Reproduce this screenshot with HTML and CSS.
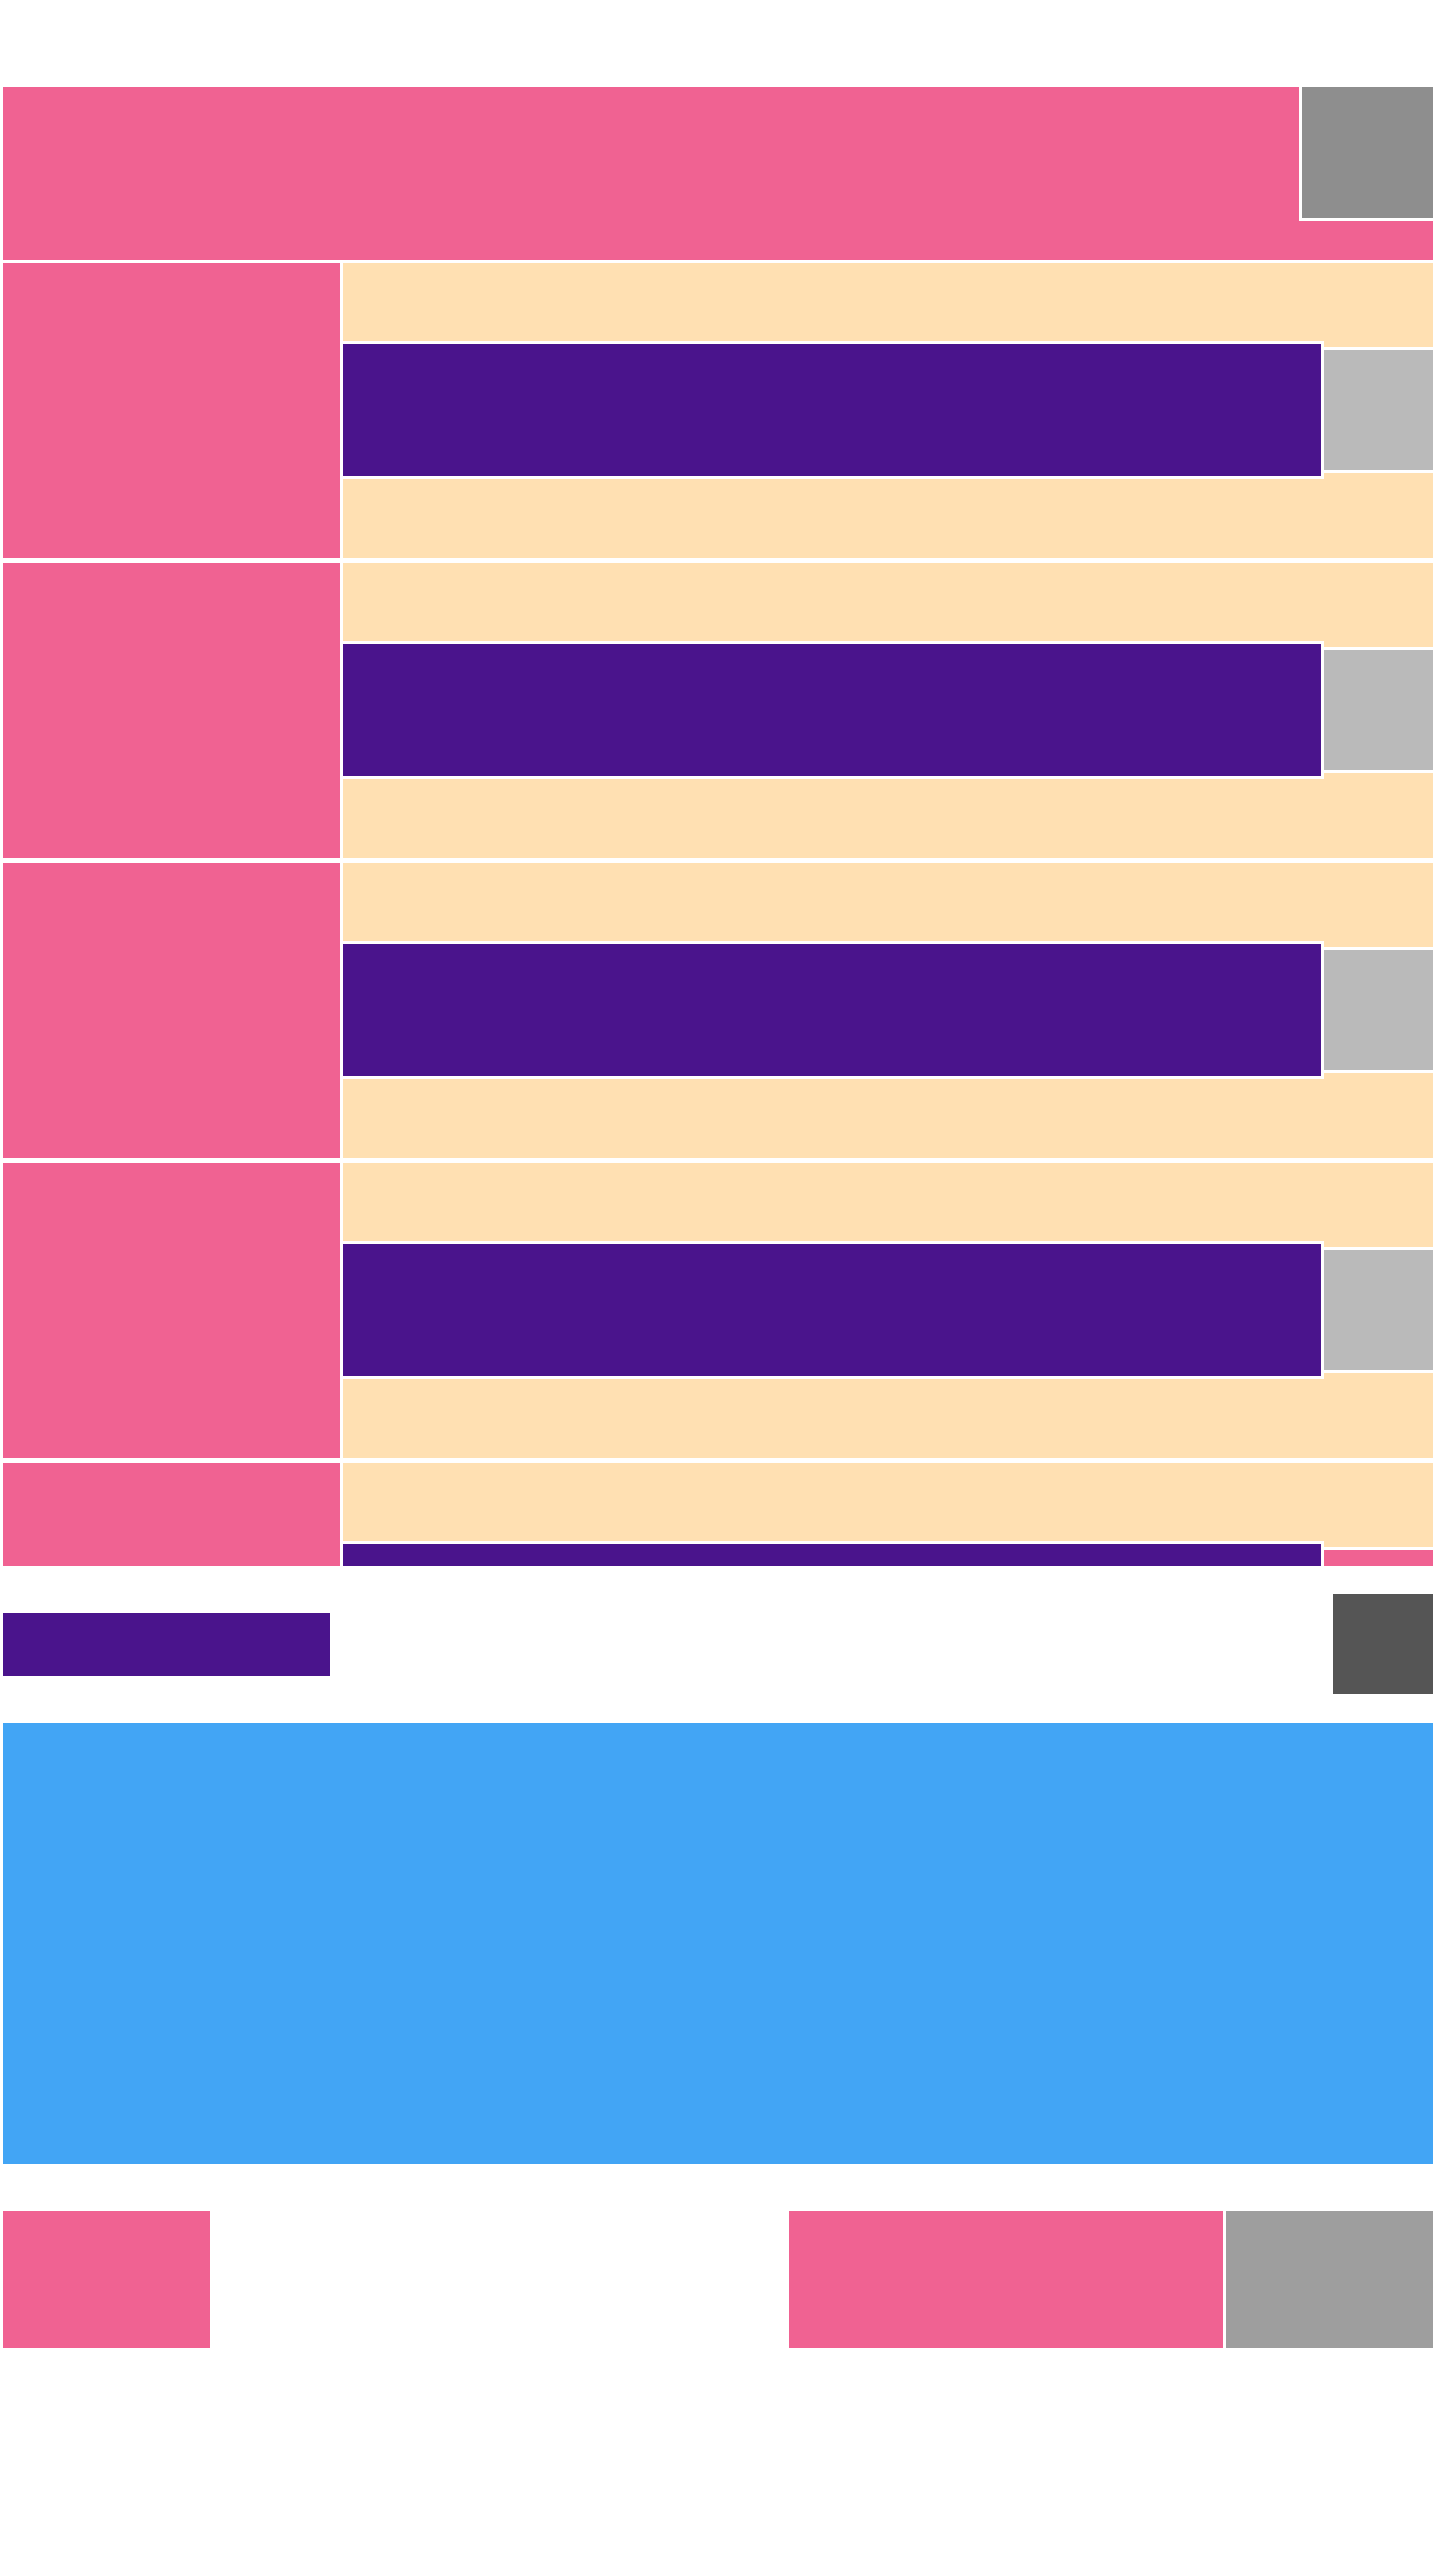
FILE: index.html
```html
<!DOCTYPE html>
<html lang="en">
<head>
  <meta charset="UTF-8">
  <title>Layout</title>
  <link rel="stylesheet" href="styles.css">
</head>
<body>
  <div class="page">
    <header class="header">
      <div class="header-box"></div>
    </header>

    <div class="list">
      <div class="row">
        <div class="row-side"></div>
        <div class="row-body">
          <div class="row-main"></div>
          <div class="row-tag"></div>
        </div>
      </div>
      <div class="row">
        <div class="row-side"></div>
        <div class="row-body">
          <div class="row-main"></div>
          <div class="row-tag"></div>
        </div>
      </div>
      <div class="row">
        <div class="row-side"></div>
        <div class="row-body">
          <div class="row-main"></div>
          <div class="row-tag"></div>
        </div>
      </div>
      <div class="row">
        <div class="row-side"></div>
        <div class="row-body">
          <div class="row-main"></div>
          <div class="row-tag"></div>
        </div>
      </div>
      <div class="row">
        <div class="row-side"></div>
        <div class="row-body">
          <div class="row-main"></div>
          <div class="row-tag active"></div>
        </div>
      </div>
    </div>

    <div class="toolbar">
      <div class="toolbar-bar"></div>
      <div class="toolbar-btn"></div>
    </div>

    <div class="panel"></div>

    <footer class="footer">
      <div class="footer-left"></div>
      <div class="footer-right">
        <div class="footer-main"></div>
        <div class="footer-side"></div>
      </div>
    </footer>
  </div>
</body>
</html>
```

FILE: styles.css
```css
* {
  box-sizing: border-box;
}

body {
  margin: 0;
  background: #ffffff;
  font-family: "Liberation Sans", Arial, sans-serif;
}

.page {
  padding: 87px 7px 0 3px;
  min-height: 2560px;
}

.header {
  height: 173px;
  background-color: #f06292;
  display: flex;
  justify-content: flex-end;
  align-items: flex-start;
}

.header-box {
  width: 134px;
  height: 134px;
  background-color: #8e8e8e;
  border-left: 3px solid #ffffff;
  border-bottom: 3px solid #ffffff;
}

.list {
  margin-top: 3px;
  height: 1303px;
  overflow: hidden;
  display: flex;
  flex-direction: column;
  gap: 5px;
}

.row {
  flex: 0 0 295px;
  display: flex;
  gap: 3px;
}

.row-side {
  width: 337px;
  background-color: #f06292;
}

.row-body {
  flex: 1;
  background-color: #ffe0b2;
  display: flex;
  align-items: center;
  padding-bottom: 1px;
}

.row-main {
  flex: 1;
  height: 138px;
  background-color: #4a148c;
  border: 3px solid #ffffff;
  border-left: 0;
}

.row-tag {
  width: 109px;
  height: 126px;
  background-color: #bababa;
  border-top: 3px solid #ffffff;
  border-bottom: 3px solid #ffffff;
}

.row-tag.active {
  background-color: #f06292;
}

.toolbar {
  margin-top: 28px;
  height: 100px;
  display: flex;
  justify-content: space-between;
  align-items: center;
}

.toolbar-bar {
  width: 327px;
  height: 63px;
  background-color: #4a148c;
}

.toolbar-btn {
  width: 100px;
  height: 100px;
  background-color: #555555;
}

.panel {
  margin-top: 29px;
  height: 441px;
  background-color: #42a5f5;
}

.footer {
  margin-top: 47px;
  height: 137px;
  display: flex;
  justify-content: space-between;
}

.footer-left {
  width: 207px;
  background-color: #f06292;
}

.footer-right {
  display: flex;
  gap: 3px;
}

.footer-main {
  width: 434px;
  background-color: #f06292;
}

.footer-side {
  width: 207px;
  background-color: #9e9e9e;
}
```
